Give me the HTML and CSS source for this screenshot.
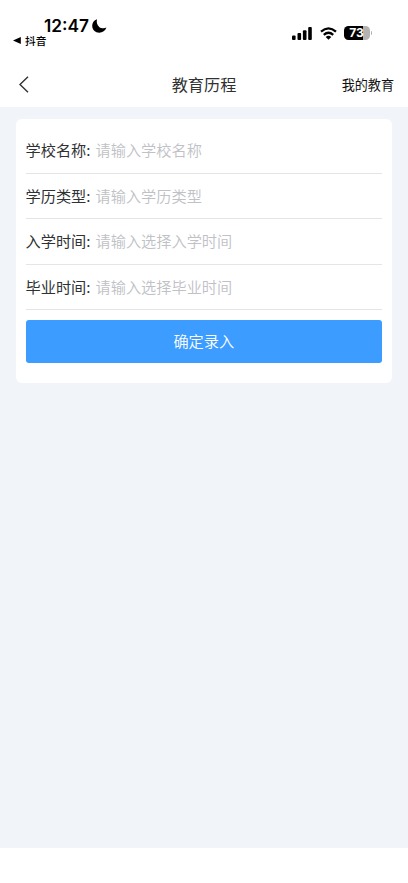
FILE: index.html
```html
<!DOCTYPE html>
<html lang="zh-CN">
<head>
<meta charset="utf-8">
<meta name="viewport" content="width=device-width, initial-scale=1">
<title>教育历程</title>
<link rel="stylesheet" href="styles.css">
</head>
<body>
<div class="status">
  <div class="status-left">
    <div class="clock"><span>12:47</span>
      <svg class="moon" width="15" height="14" viewBox="0 0 15 14"><path d="M5 .2C1.900 1 .2 3.900.2 6.800.2 10.800 3.300 13.800 7.300 13.800 10.500 13.800 13.400 11.900 14.400 8.600 12.600 9.600 9.400 9.800 7.200 7.900 5 6 4.300 3 5 .2Z"/></svg>
    </div>
    <div class="return"><svg width="8" height="7" viewBox="0 0 8 7"><path d="M0 3.500 7.800 0v7Z"/></svg><span>抖音</span></div>
  </div>
  <div class="status-right">
    <svg class="signal" width="20" height="13" viewBox="0 0 20 13"><rect x="0" y="8.500" width="3.600" height="4.500" rx="1"/><rect x="5.500" y="6" width="3.600" height="7" rx="1"/><rect x="10.900" y="3.300" width="3.600" height="9.700" rx="1"/><rect x="16.200" y="0" width="3.600" height="13" rx="1"/></svg>
    <svg class="wifi" width="17" height="13" viewBox="0 0 17 13"><path class="wave" d="M1 4.600Q8.500-1.800 16 4.600M3.800 7.800Q8.500 3.700 13.200 7.800"/><path d="M5.700 9.900Q8.500 7.800 11.300 9.900L8.500 12.700Z"/></svg>
    <div class="battery"><span>73</span></div><i class="battery-tip"></i>
  </div>
</div>
<header class="nav">
  <svg class="back" width="10" height="17" viewBox="0 0 10 17"><path d="M9 .8 1 8.500 9 16.200"/></svg>
  <h1>教育历程</h1>
  <a class="mine">我的教育</a>
</header>
<main>
  <form class="card">
    <div class="row"><span class="label">学校名称:</span><span class="hint">请输入学校名称</span></div>
    <div class="row"><span class="label">学历类型:</span><span class="hint">请输入学历类型</span></div>
    <div class="row"><span class="label">入学时间:</span><span class="hint">请输入选择入学时间</span></div>
    <div class="row"><span class="label">毕业时间:</span><span class="hint">请输入选择毕业时间</span></div>
    <button type="button">确定录入</button>
  </form>
</main>
</body>
</html>
```
FILE: styles.css
```css
* { box-sizing: border-box; }
body {
  margin: 0;
  height: 883px;
  display: flex;
  flex-direction: column;
  background: #fff;
  color: #303133;
  font-family: "Noto Sans CJK SC", sans-serif;
  padding-bottom: 35px;
}
svg { display: block; flex: none; }
.status {
  height: 62px;
  display: flex;
  justify-content: space-between;
  padding: 16px 36px 0 13px;
  color: #000;
}
.clock {
  display: flex;
  align-items: center;
  height: 19px;
  gap: 3px;
  margin-left: 31px;
  font: 600 17.3px/19px Inter, sans-serif;
}
.return {
  display: flex;
  align-items: center;
  gap: 4px;
  height: 12px;
  font-size: 10.7px;
  line-height: 12px;
}
.return svg { margin-top: -2px; }
.return span { margin-top: -1px; font-weight: 500; }
.status-right { display: flex; align-items: center; height: 34px; }
.wifi { margin-left: 8px; }
.wave { fill: none; stroke: #000; stroke-width: 2.3; }
.battery {
  width: 26px;
  height: 14px;
  margin-left: 7px;
  border-radius: 4.500px;
  background: linear-gradient(90deg, #000 74%, #b3b3b3 74%);
  color: #fff;
  font: 700 12px/14px Inter, sans-serif;
  text-align: center;
}
.battery-tip { width: 1.500px; height: 4px; margin-left: 1px; border-radius: 0 2px 2px 0; background: #b3b3b3; }
.nav {
  height: 45px;
  display: grid;
  grid-template-columns: 1fr auto 1fr;
  align-items: center;
  padding: 0 14px 0 19px;
}
.back path { fill: none; stroke: #303133; stroke-width: 1.400; }
h1 { margin: -2px 5px 0 0; font-size: 16.2px; font-weight: 400; line-height: 24px; }
.mine { justify-self: end; font-size: 13.1px; line-height: 20px; color: #111; }
main { flex: 1; background: #f1f5fa; padding: 12px 16px 0 15.500px; }
.card {
  height: 264px;
  padding: 9.500px 10px 0;
  border-radius: 6px;
  background: #fff;
}
.row {
  display: flex;
  align-items: center;
  height: 45.400px;
  padding-bottom: 2px;
  border-bottom: 1px solid #e4e5e8;
  font-size: 15.2px;
  line-height: 24px;
}
.row:first-child { padding-bottom: 3px; }
.label { width: 70px; }
.hint { color: #c0c1c6; font-weight: 350; }
button {
  display: block;
  width: 100%;
  height: 43px;
  margin-top: 9.900px;
  padding: 0 0 3px;
  border: 0;
  border-radius: 3px;
  background: #3c9cff;
  color: #fff;
  font: 350 15.200px/22px "Noto Sans CJK SC", sans-serif;
}
```
